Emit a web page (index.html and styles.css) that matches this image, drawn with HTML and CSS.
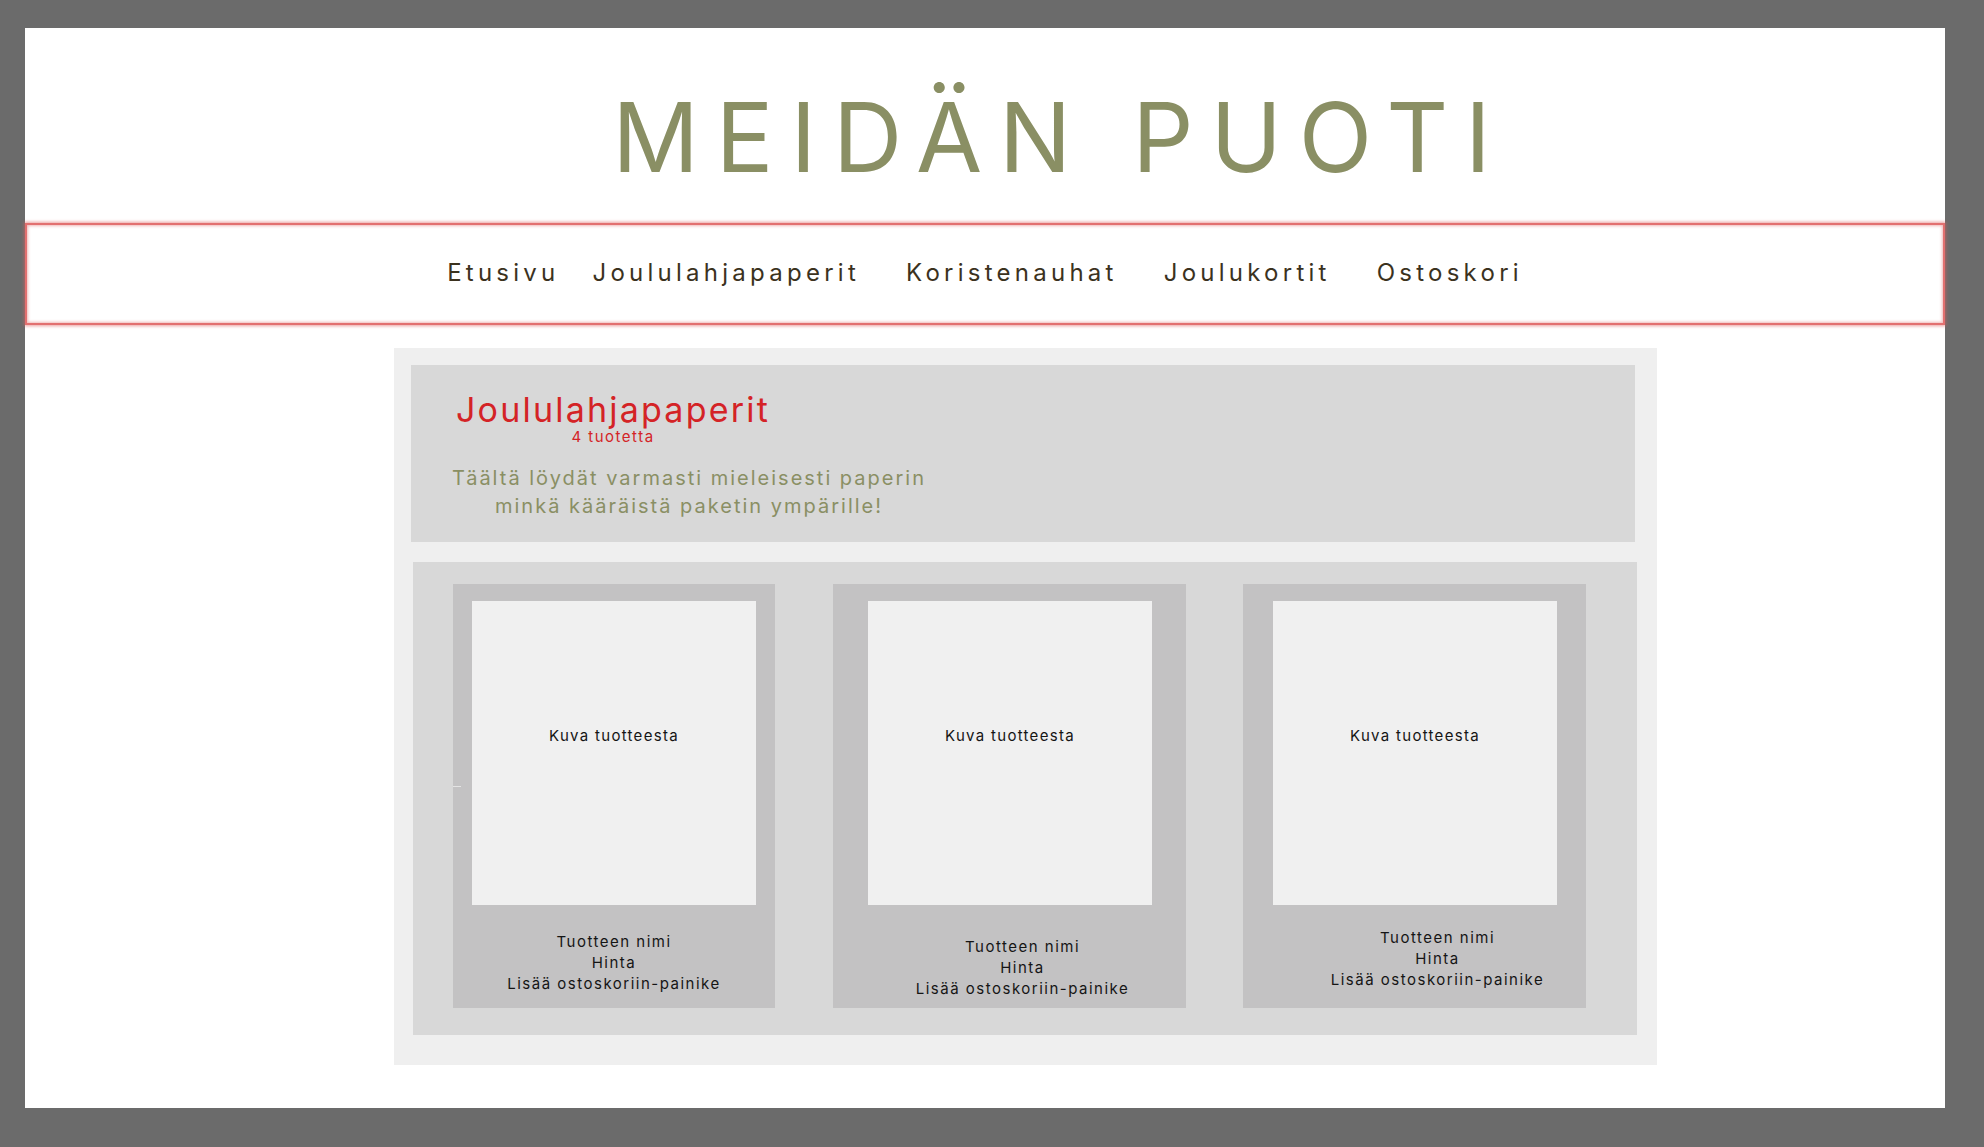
FILE: index.html
```html
<!DOCTYPE html>
<html lang="fi">
<head>
<meta charset="utf-8">
<title>Meidän Puoti</title>
<link rel="stylesheet" href="styles.css">
</head>
<body>
<div class="page">
  <header class="site-header">
    <h1 class="logo">MEIDÄN PUOTI</h1>
  </header>
  <nav class="main-nav">
    <a class="nav-link first" href="#">Etusivu</a>
    <a class="nav-link" href="#">Joululahjapaperit</a>
    <a class="nav-link" href="#">Koristenauhat</a>
    <a class="nav-link" href="#">Joulukortit</a>
    <a class="nav-link" href="#">Ostoskori</a>
  </nav>
  <main class="content">
    <section class="category-head">
      <div class="cat-title-block">
        <h2 class="cat-title">Joululahjapaperit</h2>
        <div class="cat-count">4 tuotetta</div>
      </div>
      <p class="cat-desc">Täältä löydät varmasti mieleisesti paperin<br>minkä kääräistä paketin ympärille!</p>
    </section>
    <section class="products">
      <article class="card card-1">
        <span class="tick"></span>
        <div class="card-img">Kuva tuotteesta</div>
        <div class="card-info">Tuotteen nimi<br>Hinta<br>Lisää ostoskoriin-painike</div>
      </article>
      <article class="card card-2">
        <div class="card-img">Kuva tuotteesta</div>
        <div class="card-info">Tuotteen nimi<br>Hinta<br>Lisää ostoskoriin-painike</div>
      </article>
      <article class="card card-3">
        <div class="card-img">Kuva tuotteesta</div>
        <div class="card-info">Tuotteen nimi<br>Hinta<br>Lisää ostoskoriin-painike</div>
      </article>
    </section>
  </main>
</div>
</body>
</html>
```
FILE: styles.css
```css
* { box-sizing: border-box; }

html, body {
  margin: 0;
  padding: 0;
}

body {
  background: #6b6b6b;
  font-family: Inter, "Noto Sans", "Liberation Sans", sans-serif;
  padding: 28px 39px 39px 25px;
}

.page {
  width: 1920px;
  height: 1080px;
  background: #ffffff;
}

.site-header {
  height: 195px;
  padding-top: 51px;
  padding-left: 150px;
  text-align: center;
}

.logo {
  margin: 0;
  font-size: 96px;
  line-height: 116px;
  font-weight: 400;
  letter-spacing: 16.9px;
  color: #8a8f64;
}

.main-nav {
  height: 102px;
  border: 2px solid #e27070;
  box-shadow: 0 0 3px 1px rgba(222, 95, 95, 0.6), inset 0 0 3px 1px rgba(222, 95, 95, 0.45);
  display: flex;
  justify-content: center;
  gap: 46px;
  padding-top: 33px;
}

.nav-link {
  font-size: 24px;
  line-height: 30px;
  letter-spacing: 4.25px;
  color: #3b321e;
  text-decoration: none;
}

.nav-link.first {
  margin-right: -13px;
}

.content {
  margin: 23px 0 0 369px;
  width: 1263px;
  height: 717px;
  background: #efefef;
  padding: 17px 0 0 17px;
}

.category-head {
  width: 1224px;
  height: 177px;
  background: #d8d8d8;
  padding: 27px 0 0 30px;
}

.cat-title-block {
  width: 344px;
  text-align: center;
}

.cat-title {
  margin: 0;
  font-size: 34px;
  line-height: 36px;
  font-weight: 400;
  letter-spacing: 2.2px;
  color: #d42326;
}

.cat-count {
  font-size: 15px;
  line-height: 18px;
  letter-spacing: 1.5px;
  color: #d42326;
}

.cat-desc {
  margin: 18px 0 0 0;
  width: 496px;
  text-align: center;
  font-size: 20px;
  line-height: 28px;
  letter-spacing: 2px;
  color: #8a8f64;
}

.products {
  margin: 20px 0 0 2px;
  width: 1224px;
  height: 473px;
  background: #d8d8d8;
  display: flex;
  align-items: flex-start;
  gap: 57px;
  padding: 22px 0 0 40px;
}

.card {
  position: relative;
  height: 424px;
  background: #c3c2c3;
  padding-top: 17px;
  color: #151515;
  font-size: 15px;
  line-height: 21px;
  letter-spacing: 1.5px;
}

.card-1 { width: 322px; }
.card-2 { width: 353px; margin-left: 1px; }
.card-3 { width: 343px; }

.card-img {
  width: 284px;
  height: 304px;
  background: #f0f0f0;
  text-align: center;
  padding-top: 124px;
  letter-spacing: 1.3px;
}

.card-1 .card-img { margin-left: 19px; }
.card-2 .card-img { margin-left: 35px; }
.card-3 .card-img { margin-left: 30px; }

.card-info {
  text-align: center;
}

.card-1 .card-info { margin-top: 26px; }
.card-2 .card-info { margin-top: 31px; padding-left: 26px; }
.card-3 .card-info { margin-top: 22px; padding-left: 46px; }

.tick {
  position: absolute;
  left: 0;
  top: 202px;
  width: 8px;
  height: 1px;
  background: #e4e4e4;
}
```
